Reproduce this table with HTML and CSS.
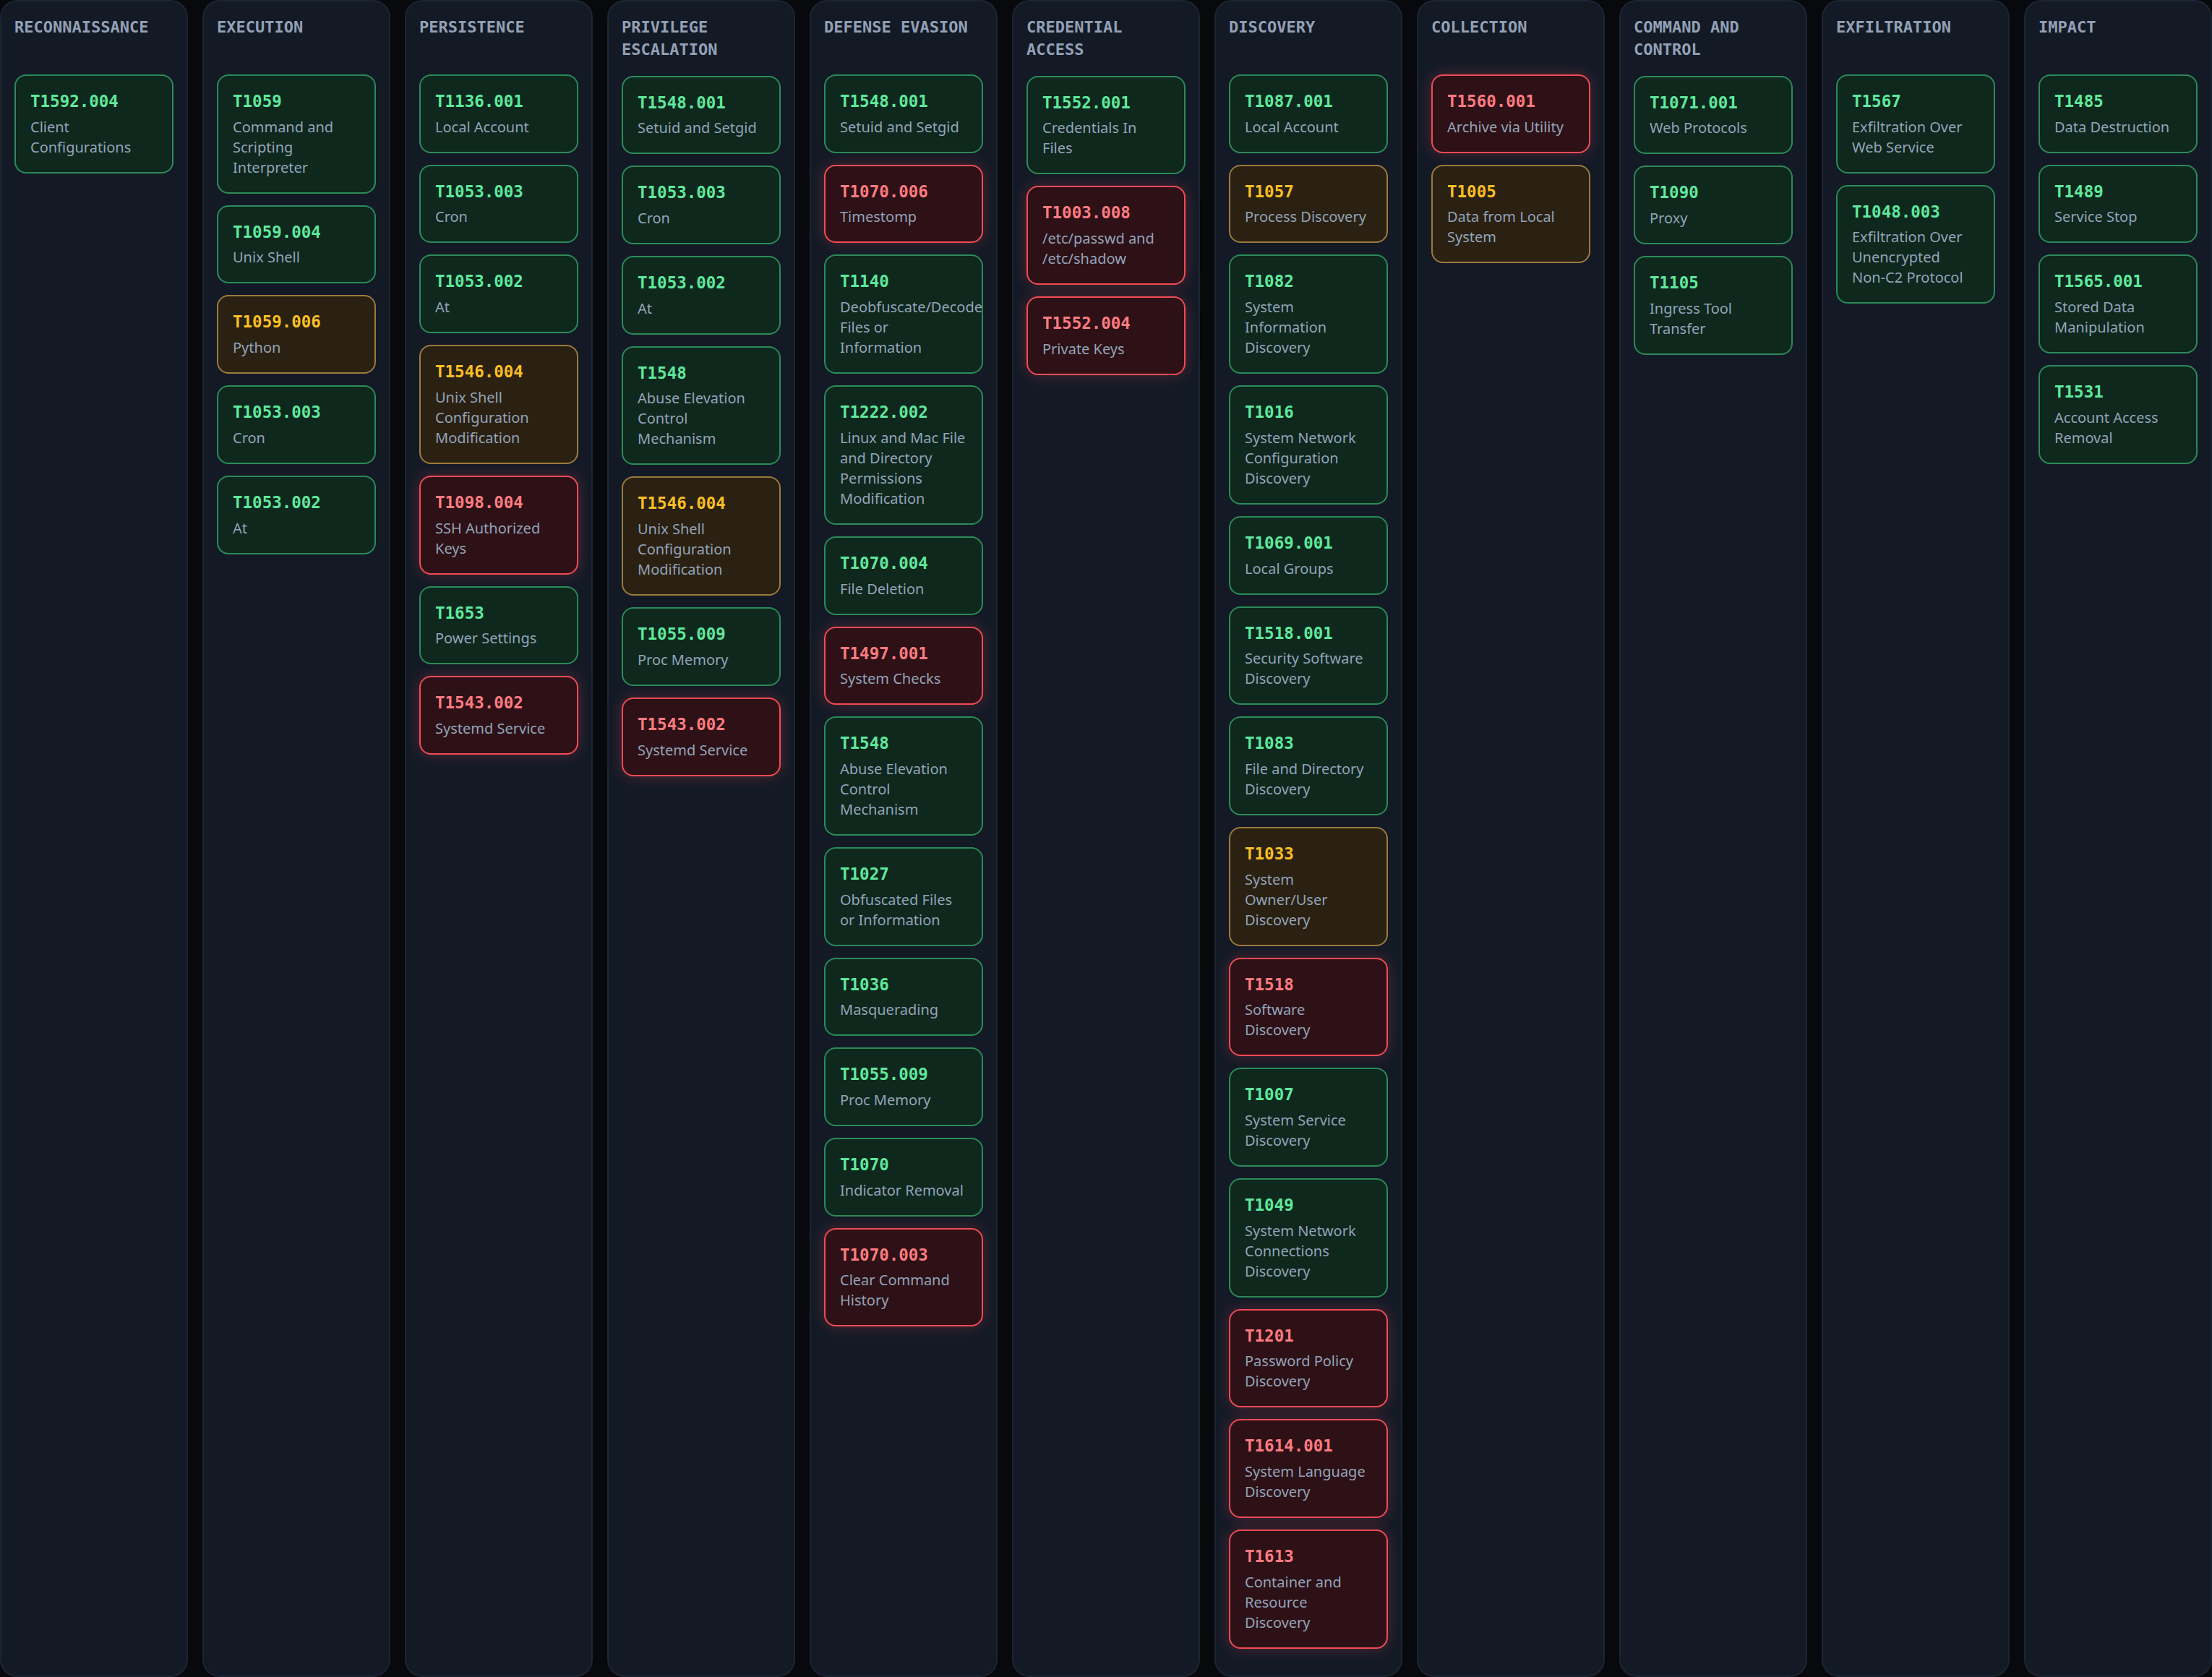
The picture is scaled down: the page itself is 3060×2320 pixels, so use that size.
FILE: index.html
```html
<!DOCTYPE html>
<html lang="en">
<head>
<meta charset="utf-8">
<title>ATT&amp;CK Matrix</title>
<link rel="stylesheet" href="styles.css">
</head>
<body>
<main class="board">
  <section class="tactic">
    <h2 class="tactic-title">RECONNAISSANCE</h2>
    <div class="tech-list">
      <div class="tech ok"><div class="tid">T1592.004</div><div class="tname">Client Configurations</div></div>
    </div>
  </section>

  <section class="tactic">
    <h2 class="tactic-title">EXECUTION</h2>
    <div class="tech-list">
      <div class="tech ok"><div class="tid">T1059</div><div class="tname">Command and Scripting Interpreter</div></div>
      <div class="tech ok"><div class="tid">T1059.004</div><div class="tname">Unix Shell</div></div>
      <div class="tech warn"><div class="tid">T1059.006</div><div class="tname">Python</div></div>
      <div class="tech ok"><div class="tid">T1053.003</div><div class="tname">Cron</div></div>
      <div class="tech ok"><div class="tid">T1053.002</div><div class="tname">At</div></div>
    </div>
  </section>

  <section class="tactic">
    <h2 class="tactic-title">PERSISTENCE</h2>
    <div class="tech-list">
      <div class="tech ok"><div class="tid">T1136.001</div><div class="tname">Local Account</div></div>
      <div class="tech ok"><div class="tid">T1053.003</div><div class="tname">Cron</div></div>
      <div class="tech ok"><div class="tid">T1053.002</div><div class="tname">At</div></div>
      <div class="tech warn"><div class="tid">T1546.004</div><div class="tname">Unix Shell Configuration Modification</div></div>
      <div class="tech crit"><div class="tid">T1098.004</div><div class="tname">SSH Authorized Keys</div></div>
      <div class="tech ok"><div class="tid">T1653</div><div class="tname">Power Settings</div></div>
      <div class="tech crit"><div class="tid">T1543.002</div><div class="tname">Systemd Service</div></div>
    </div>
  </section>

  <section class="tactic">
    <h2 class="tactic-title">PRIVILEGE ESCALATION</h2>
    <div class="tech-list">
      <div class="tech ok"><div class="tid">T1548.001</div><div class="tname">Setuid and Setgid</div></div>
      <div class="tech ok"><div class="tid">T1053.003</div><div class="tname">Cron</div></div>
      <div class="tech ok"><div class="tid">T1053.002</div><div class="tname">At</div></div>
      <div class="tech ok"><div class="tid">T1548</div><div class="tname">Abuse Elevation Control Mechanism</div></div>
      <div class="tech warn"><div class="tid">T1546.004</div><div class="tname">Unix Shell Configuration Modification</div></div>
      <div class="tech ok"><div class="tid">T1055.009</div><div class="tname">Proc Memory</div></div>
      <div class="tech crit"><div class="tid">T1543.002</div><div class="tname">Systemd Service</div></div>
    </div>
  </section>

  <section class="tactic">
    <h2 class="tactic-title">DEFENSE EVASION</h2>
    <div class="tech-list">
      <div class="tech ok"><div class="tid">T1548.001</div><div class="tname">Setuid and Setgid</div></div>
      <div class="tech crit"><div class="tid">T1070.006</div><div class="tname">Timestomp</div></div>
      <div class="tech ok"><div class="tid">T1140</div><div class="tname">Deobfuscate/Decode Files or Information</div></div>
      <div class="tech ok"><div class="tid">T1222.002</div><div class="tname">Linux and Mac File and Directory Permissions Modification</div></div>
      <div class="tech ok"><div class="tid">T1070.004</div><div class="tname">File Deletion</div></div>
      <div class="tech crit"><div class="tid">T1497.001</div><div class="tname">System Checks</div></div>
      <div class="tech ok"><div class="tid">T1548</div><div class="tname">Abuse Elevation Control Mechanism</div></div>
      <div class="tech ok"><div class="tid">T1027</div><div class="tname">Obfuscated Files or Information</div></div>
      <div class="tech ok"><div class="tid">T1036</div><div class="tname">Masquerading</div></div>
      <div class="tech ok"><div class="tid">T1055.009</div><div class="tname">Proc Memory</div></div>
      <div class="tech ok"><div class="tid">T1070</div><div class="tname">Indicator Removal</div></div>
      <div class="tech crit"><div class="tid">T1070.003</div><div class="tname">Clear Command History</div></div>
    </div>
  </section>

  <section class="tactic">
    <h2 class="tactic-title">CREDENTIAL ACCESS</h2>
    <div class="tech-list">
      <div class="tech ok"><div class="tid">T1552.001</div><div class="tname">Credentials In Files</div></div>
      <div class="tech crit"><div class="tid">T1003.008</div><div class="tname">/etc/passwd and /etc/shadow</div></div>
      <div class="tech crit"><div class="tid">T1552.004</div><div class="tname">Private Keys</div></div>
    </div>
  </section>

  <section class="tactic">
    <h2 class="tactic-title">DISCOVERY</h2>
    <div class="tech-list">
      <div class="tech ok"><div class="tid">T1087.001</div><div class="tname">Local Account</div></div>
      <div class="tech warn"><div class="tid">T1057</div><div class="tname">Process Discovery</div></div>
      <div class="tech ok"><div class="tid">T1082</div><div class="tname">System Information Discovery</div></div>
      <div class="tech ok"><div class="tid">T1016</div><div class="tname">System Network Configuration Discovery</div></div>
      <div class="tech ok"><div class="tid">T1069.001</div><div class="tname">Local Groups</div></div>
      <div class="tech ok"><div class="tid">T1518.001</div><div class="tname">Security Software Discovery</div></div>
      <div class="tech ok"><div class="tid">T1083</div><div class="tname">File and Directory Discovery</div></div>
      <div class="tech warn"><div class="tid">T1033</div><div class="tname">System Owner/User Discovery</div></div>
      <div class="tech crit"><div class="tid">T1518</div><div class="tname">Software Discovery</div></div>
      <div class="tech ok"><div class="tid">T1007</div><div class="tname">System Service Discovery</div></div>
      <div class="tech ok"><div class="tid">T1049</div><div class="tname">System Network Connections Discovery</div></div>
      <div class="tech crit"><div class="tid">T1201</div><div class="tname">Password Policy Discovery</div></div>
      <div class="tech crit"><div class="tid">T1614.001</div><div class="tname">System Language Discovery</div></div>
      <div class="tech crit"><div class="tid">T1613</div><div class="tname">Container and Resource Discovery</div></div>
    </div>
  </section>

  <section class="tactic">
    <h2 class="tactic-title">COLLECTION</h2>
    <div class="tech-list">
      <div class="tech crit"><div class="tid">T1560.001</div><div class="tname">Archive via Utility</div></div>
      <div class="tech warn"><div class="tid">T1005</div><div class="tname">Data from Local System</div></div>
    </div>
  </section>

  <section class="tactic">
    <h2 class="tactic-title">COMMAND AND CONTROL</h2>
    <div class="tech-list">
      <div class="tech ok"><div class="tid">T1071.001</div><div class="tname">Web Protocols</div></div>
      <div class="tech ok"><div class="tid">T1090</div><div class="tname">Proxy</div></div>
      <div class="tech ok"><div class="tid">T1105</div><div class="tname">Ingress Tool Transfer</div></div>
    </div>
  </section>

  <section class="tactic">
    <h2 class="tactic-title">EXFILTRATION</h2>
    <div class="tech-list">
      <div class="tech ok"><div class="tid">T1567</div><div class="tname">Exfiltration Over Web Service</div></div>
      <div class="tech ok"><div class="tid">T1048.003</div><div class="tname">Exfiltration Over Unencrypted <span class="nowrap">Non-C2</span> Protocol</div></div>
    </div>
  </section>

  <section class="tactic">
    <h2 class="tactic-title">IMPACT</h2>
    <div class="tech-list">
      <div class="tech ok"><div class="tid">T1485</div><div class="tname">Data Destruction</div></div>
      <div class="tech ok"><div class="tid">T1489</div><div class="tname">Service Stop</div></div>
      <div class="tech ok"><div class="tid">T1565.001</div><div class="tname">Stored Data Manipulation</div></div>
      <div class="tech ok"><div class="tid">T1531</div><div class="tname">Account Access Removal</div></div>
    </div>
  </section>
</main>
</body>
</html>
```
FILE: styles.css
```css
* { box-sizing: border-box; }

html, body {
  margin: 0;
  padding: 0;
  background: #07090c;
}

body {
  font-family: "Noto Sans", "Open Sans", sans-serif;
  line-height: 1.4;
  color: #94a3b8;
}

.board {
  display: grid;
  grid-template-columns: repeat(11, 1fr);
  gap: 20px;
  height: 100vh;
  align-items: stretch;
}

.tactic {
  background: #131a26;
  border: 2px solid #1d2533;
  border-radius: 24px;
  padding: 21px 18px 18px;
  min-width: 0;
}

.tactic-title {
  margin: 0 0 20px;
  min-height: 60px;
  font-family: "DejaVu Sans Mono", monospace;
  font-size: 22px;
  font-weight: 700;
  line-height: 30.8px;
  color: #93a0b5;
}

.tech-list {
  display: flex;
  flex-direction: column;
  gap: 16px;
}

.tech {
  border: 2px solid;
  border-radius: 16px;
  padding: 20px;
}

.tid {
  font-family: "DejaVu Sans Mono", monospace;
  font-weight: 700;
  font-size: 22.5px;
  line-height: 31.7px;
  margin-bottom: 5px;
}

.tname {
  font-size: 20px;
  line-height: 28px;
  color: #94a3b8;
}

.nowrap { white-space: nowrap; }

.tech.ok {
  background: #0e281e;
  border-color: #2c8a58;
}
.tech.ok .tid { color: #5fe99c; }

.tech.warn {
  background: #2a2113;
  border-color: #9c7a3c;
}
.tech.warn .tid { color: #fbbf24; }

.tech.crit {
  background: #2d1117;
  border-color: #f04b55;
  box-shadow: 0 0 20px rgba(240, 75, 85, 0.28);
}
.tech.crit .tid { color: #ff7b7f; }
```
